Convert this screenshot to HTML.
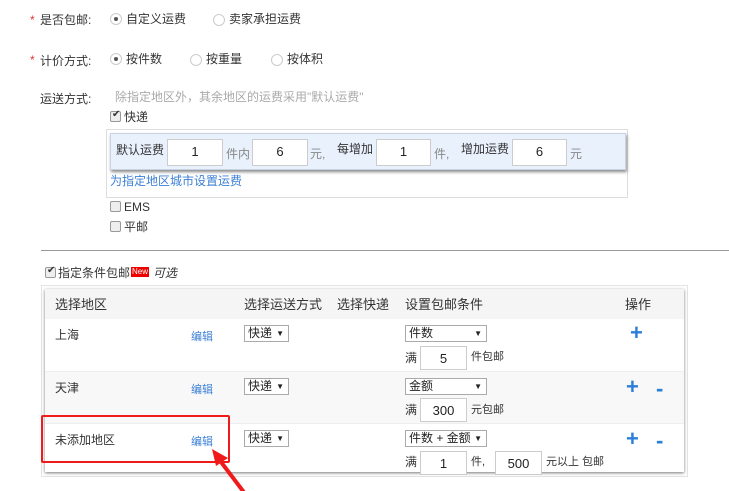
<!DOCTYPE html>
<html><head><meta charset="utf-8"><style>
*{margin:0;padding:0;box-sizing:border-box}
body{width:729px;height:491px;background:#fff;position:relative;overflow:hidden;font-family:"Liberation Sans","Noto Sans CJK SC",sans-serif;font-size:12px;color:#333}
.a{position:absolute;white-space:nowrap;line-height:14px}
.r{position:absolute;width:12px;height:12px;border:1px solid #ccc;border-radius:50%;background:#fff}
.r.on::after{content:"";position:absolute;left:3px;top:3px;width:4px;height:4px;border-radius:50%;background:#555}
.cb{position:absolute;width:11px;height:11px;border:1px solid #999;border-radius:2px;background:#eee}
.cb.on::after{content:"✔";position:absolute;left:1px;top:-3px;font-size:10px;color:#333}
.in{position:absolute;background:#fff;border:1px solid #ccc;text-align:center;line-height:24px;font-size:13px;color:#222}
.sel{position:absolute;border:1px solid #aaa;background:#fff;height:17px;line-height:15px;padding-left:3px;font-size:12px;color:#222}
.sel::after{content:"▼";position:absolute;right:4px;top:0;font-size:8px}
.blue{color:#3b7fd6}
.plus{position:absolute;color:#2b7fd8;font-size:22px;font-weight:bold;line-height:20px}
</style></head><body>
<span class="a" style="left:30px;top:13px;color:#e33">*</span><span class="a" style="left:40px;top:13px">是否包邮:</span>
<div class="r on" style="left:110px;top:13px"></div><span class="a" style="left:126px;top:12px">自定义运费</span>
<div class="r" style="left:213px;top:14px"></div><span class="a" style="left:229px;top:12px">卖家承担运费</span>
<span class="a" style="left:30px;top:53px;color:#e33">*</span><span class="a" style="left:40px;top:54px">计价方式:</span>
<div class="r on" style="left:110px;top:53px"></div><span class="a" style="left:126px;top:52px">按件数</span>
<div class="r" style="left:190px;top:54px"></div><span class="a" style="left:206px;top:52px">按重量</span>
<div class="r" style="left:271px;top:54px"></div><span class="a" style="left:287px;top:52px">按体积</span>
<span class="a" style="left:40px;top:92px">运送方式:</span>
<span class="a" style="left:115px;top:90px;color:#aaa">除指定地区外，其余地区的运费采用"默认运费"</span>
<div class="cb on" style="left:110px;top:111px"></div><span class="a" style="left:124px;top:110px">快递</span>
<div style="position:absolute;left:106px;top:129px;width:522px;height:69px;border:1px solid #ddd"></div>
<div style="position:absolute;left:110px;top:133px;width:516px;height:37px;background:#e8f1fc;border:1px solid #c8d4e4;box-shadow:1px 2px 3px #888"></div>
<span class="a" style="left:116px;top:143px">默认运费</span>
<div class="in" style="left:167px;top:139px;width:56px;height:27px">1</div><span class="a" style="left:226px;top:147px;color:#888">件内</span>
<div class="in" style="left:252px;top:139px;width:56px;height:27px">6</div><span class="a" style="left:310px;top:147px;color:#888">元,</span>
<span class="a" style="left:337px;top:142px">每增加</span>
<div class="in" style="left:376px;top:139px;width:55px;height:27px">1</div><span class="a" style="left:434px;top:147px;color:#888">件,</span>
<span class="a" style="left:461px;top:142px">增加运费</span>
<div class="in" style="left:512px;top:139px;width:55px;height:27px">6</div><span class="a" style="left:570px;top:147px;color:#888">元</span>
<span class="a blue" style="left:110px;top:174px">为指定地区城市设置运费</span>
<div class="cb" style="left:110px;top:201px"></div><span class="a" style="left:124px;top:200px">EMS</span>
<div class="cb" style="left:110px;top:221px"></div><span class="a" style="left:124px;top:220px">平邮</span>
<div style="position:absolute;left:41px;top:250px;width:688px;height:1px;background:#999"></div>
<div class="cb on" style="left:45px;top:267px"></div><span class="a" style="left:58px;top:266px">指定条件包邮</span>
<span class="a" style="left:131px;top:267px;background:#e00;color:#fff;font-size:8px;line-height:10px;padding:0 1px">New</span><span class="a" style="left:153px;top:266px;font-style:italic">可选</span>
<div style="position:absolute;left:41px;top:285px;width:647px;height:192px;border:1px solid #e4e4e4"></div>
<div style="position:absolute;left:45px;top:289px;width:639px;height:183px;background:#fff;box-shadow:0 1px 3px #777"></div>
<div style="position:absolute;left:45px;top:289px;width:639px;height:30px;background:#f5f5f5"></div>
<div style="position:absolute;left:45px;top:371px;width:639px;height:53px;background:#f8f8f8;border-top:1px solid #eee;border-bottom:1px solid #eee"></div>
<span class="a" style="left:55px;top:298px;font-size:13px">选择地区</span>
<span class="a" style="left:244px;top:298px;font-size:13px">选择运送方式</span>
<span class="a" style="left:337px;top:298px;font-size:13px">选择快递</span>
<span class="a" style="left:405px;top:298px;font-size:13px">设置包邮条件</span>
<span class="a" style="left:625px;top:298px;font-size:13px">操作</span>
<!-- row1 -->
<span class="a" style="left:55px;top:328px">上海</span><span class="a blue" style="left:191px;top:330px;font-size:11px">编辑</span>
<div class="sel" style="left:244px;top:325px;width:45px">快递</div>
<div class="sel" style="left:405px;top:325px;width:82px">件数</div>
<span class="a" style="left:405px;top:351px">满</span><div class="in" style="left:420px;top:346px;width:47px;height:24px">5</div><span class="a" style="left:471px;top:350px;font-size:11px">件包邮</span>
<span class="plus" style="left:630px;top:323px">+</span>
<!-- row2 -->
<span class="a" style="left:55px;top:381px">天津</span><span class="a blue" style="left:191px;top:383px;font-size:11px">编辑</span>
<div class="sel" style="left:244px;top:378px;width:45px">快递</div>
<div class="sel" style="left:405px;top:378px;width:82px">金额</div>
<span class="a" style="left:405px;top:403px">满</span><div class="in" style="left:420px;top:398px;width:47px;height:24px">300</div><span class="a" style="left:471px;top:403px;font-size:11px">元包邮</span>
<span class="plus" style="left:626px;top:377px">+</span><span class="plus" style="left:656px;top:379px">-</span>
<!-- row3 -->
<span class="a" style="left:55px;top:433px">未添加地区</span><span class="a blue" style="left:191px;top:435px;font-size:11px">编辑</span>
<div class="sel" style="left:244px;top:430px;width:45px">快递</div>
<div class="sel" style="left:405px;top:430px;width:82px">件数 + 金额</div>
<span class="a" style="left:405px;top:455px">满</span><div class="in" style="left:420px;top:451px;width:47px;height:24px">1</div><span class="a" style="left:471px;top:455px;font-size:11px">件,</span>
<div class="in" style="left:495px;top:451px;width:47px;height:24px">500</div><span class="a" style="left:546px;top:455px;font-size:11px">元以上 包邮</span>
<span class="plus" style="left:626px;top:429px">+</span><span class="plus" style="left:656px;top:431px">-</span>
<div style="position:absolute;left:41px;top:415px;width:189px;height:48px;border:2px solid #f01a1a;border-radius:2px"></div>
<svg style="position:absolute;left:0;top:0" width="729" height="491"><line x1="246" y1="495" x2="218" y2="458" stroke="#f01a1a" stroke-width="4"/><polygon points="212,449 228,458 216,466" fill="#f01a1a"/></svg>
</body></html>
